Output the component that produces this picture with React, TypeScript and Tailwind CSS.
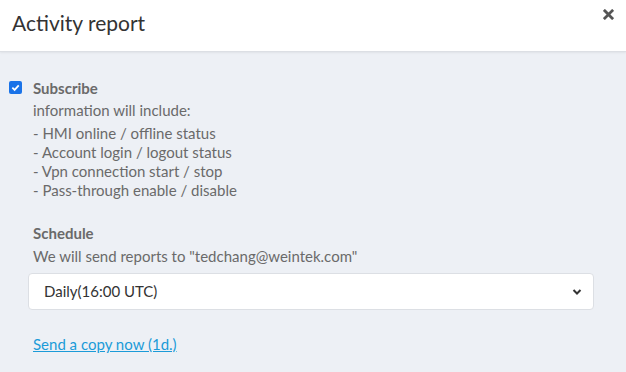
import React from 'react';

const ITEMS = [
  '- HMI online / offline status',
  '- Account login / logout status',
  '- Vpn connection start / stop',
  '- Pass-through enable / disable',
];

const App: React.FC = () => {
  return (
    <div className="w-[626px] h-[372px] overflow-hidden bg-[#edf0f5] font-['Lato','Noto_Sans',sans-serif]">
      <div className="h-[52px] bg-white border-b border-[#dcdfe4] shadow-[0_1px_2px_rgba(0,0,0,0.06)] flex items-start justify-between pl-3 pr-3">
        <h1 className="mt-[9px] text-[21px] text-[#333] leading-[28px]">Activity report</h1>
        <button className="mt-[9px] text-[#555]">
          <svg width="11" height="11" viewBox="0 0 12 12">
            <path d="M2 2 L10 10 M10 2 L2 10" stroke="currentColor" strokeWidth="3" strokeLinecap="square" />
          </svg>
        </button>
      </div>

      <div className="pl-[9px] pr-[32px] pt-[27px]">
        <div className="flex items-start gap-[11px]">
          <span className="mt-[2px] w-[13px] h-[13px] rounded-[2px] bg-[#1a73e8] flex items-center justify-center shrink-0">
            <svg width="9" height="9" viewBox="0 0 10 10">
              <path d="M1.5 5.2 L4 7.6 L8.6 2.6" fill="none" stroke="white" strokeWidth="2" />
            </svg>
          </span>
          <div className="text-[15px] text-[#6a6a6a] w-full">
            <div className="font-bold leading-[18px]">Subscribe</div>
            <div className="mt-[4px] leading-[19px]">information will include:</div>
            <ul className="mt-[4px] leading-[19px]">
              {ITEMS.map((t) => (
                <li key={t}>{t}</li>
              ))}
            </ul>

            <div className="mt-[24px] font-bold leading-[19px]">Schedule</div>
            <div className="mt-[4px] leading-[19px]">We will send reports to "tedchang@weintek.com"</div>

            <div className="mt-[7px] -ml-[5px] h-[37px] bg-white border border-[#dcdfe4] rounded-[4px] flex items-center justify-between pl-[15px] pr-[11px]">
              <span className="text-[#333] text-[15px]">Daily(16:00 UTC)</span>
              <svg width="10" height="8" viewBox="0 0 10 8">
                <path d="M1.5 2 L5 5.5 L8.5 2" fill="none" stroke="#333" strokeWidth="2" />
              </svg>
            </div>

            <a href="#" className="inline-block mt-[25px] text-[#1b9bd8] underline leading-[19px]">
              Send a copy now (1d.)
            </a>
          </div>
        </div>
      </div>
    </div>
  );
};

export default App;
